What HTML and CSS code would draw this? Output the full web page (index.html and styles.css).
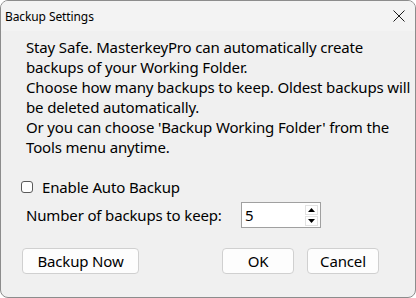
FILE: index.html
```html
<!DOCTYPE html>
<html>
<head>
<meta charset="utf-8">
<link rel="stylesheet" href="styles.css">
</head>
<body>
<div class="window">
  <div class="titlebar">
    <span class="title">Backup Settings</span>
    <svg class="close" width="12" height="12" viewBox="0 0 12 12"><path d="M0.5 0.5 L11.5 11.5 M11.5 0.5 L0.5 11.5" stroke="#1b1b1b" stroke-width="1" fill="none"/></svg>
  </div>
  <div class="client">
    <div class="intro">
      <span class="line">Stay Safe. MasterkeyPro can automatically create</span>
      <span class="line">backups of your Working Folder.</span>
      <span class="line">Choose how many backups to keep. Oldest backups&nbsp;will</span>
      <span class="line">be deleted automatically.</span>
      <span class="line">Or you can choose 'Backup Working Folder' from the</span>
      <span class="line">Tools menu anytime.</span>
    </div>
    <label class="check-row"><span class="checkbox"></span><span>Enable Auto Backup</span></label>
    <div class="num-row">
      <span class="num-label">Number of backups to keep:</span>
      <div class="spin">
        <span class="spin-value">5</span>
        <div class="spin-btns">
          <span class="spin-btn"><svg width="7" height="4" viewBox="0 0 7 4"><path d="M3.5 0 L7 4 L0 4 Z" fill="#000"/></svg></span>
          <span class="spin-btn"><svg width="7" height="4" viewBox="0 0 7 4"><path d="M0 0 L7 0 L3.5 4 Z" fill="#000"/></svg></span>
        </div>
      </div>
    </div>
    <div class="buttons">
      <button class="btn btn-wide">Backup Now</button>
      <button class="btn btn-ok">OK</button>
      <button class="btn">Cancel</button>
    </div>
  </div>
</div>
</body>
</html>
```

FILE: styles.css
```css
html, body {
  margin: 0;
  padding: 0;
  background: #ffffff;
}
.window {
  width: 416px;
  height: 298px;
  box-sizing: border-box;
  border: 1px solid #8c8c8c;
  border-radius: 8px;
  background: #f0f0f0;
  overflow: hidden;
  display: flex;
  flex-direction: column;
  font-family: "Noto Sans", "Open Sans", sans-serif;
  color: #000;
}
.titlebar {
  height: 30px;
  display: flex;
  align-items: center;
  justify-content: space-between;
  padding: 0 10px 0 4px;
  background: #f3f3f3;
}
.title {
  font-size: 12px;
  letter-spacing: -0.1px;
}
.close {
  display: block;
}
.client {
  flex: 1;
  padding: 6px 0 0 20px;
  display: flex;
  flex-direction: column;
}
.intro {
  margin: 0 0 0 5px;
  font-size: 15px;
  line-height: 20px;
  letter-spacing: -0.15px;
  display: flex;
  flex-direction: column;
  align-items: flex-start;
}
.line {
  display: block;
  white-space: nowrap;
  flex: none;
}
.check-row {
  margin-top: 20px;
  height: 20px;
  display: flex;
  align-items: center;
  gap: 9px;
  font-size: 15px;
  letter-spacing: -0.15px;
}
.checkbox {
  width: 12px;
  height: 12px;
  box-sizing: border-box;
  border: 1px solid #5a5a5a;
  border-radius: 3px;
  background: #fff;
}
.num-row {
  margin: 5px 0 0 5px;
  display: flex;
  align-items: center;
  font-size: 15px;
  letter-spacing: -0.15px;
}
.num-label {
  width: 215px;
}
.spin {
  width: 80px;
  height: 26px;
  box-sizing: border-box;
  border: 1px solid #a0a0a0;
  background: #fff;
  display: flex;
  align-items: center;
  justify-content: space-between;
  padding: 0 2px 0 3px;
}
.spin-value {
  font-size: 15px;
}
.spin-btns {
  display: flex;
  flex-direction: column;
  gap: 1px;
}
.spin-btn {
  width: 13px;
  height: 10px;
  box-sizing: border-box;
  border: 1px solid #e2e2e2;
  display: flex;
  align-items: center;
  justify-content: center;
  background: #fff;
}
.spin-btn svg {
  display: block;
}
.buttons {
  margin-top: 20px;
  display: flex;
  padding-left: 1px;
}
.btn {
  height: 26px;
  width: 72px;
  box-sizing: border-box;
  border: 1px solid #d0d0d0;
  border-radius: 4px;
  background: #fdfdfd;
  font-family: "Noto Sans", "Open Sans", sans-serif;
  font-size: 15px;
  letter-spacing: -0.15px;
  color: #000;
  padding: 0;
  margin-right: 13px;
}
.btn-wide {
  width: 117px;
  margin-right: 0;
}
.btn-ok {
  margin-left: auto;
}
.buttons .btn:last-child {
  margin-right: 36px;
}
```
